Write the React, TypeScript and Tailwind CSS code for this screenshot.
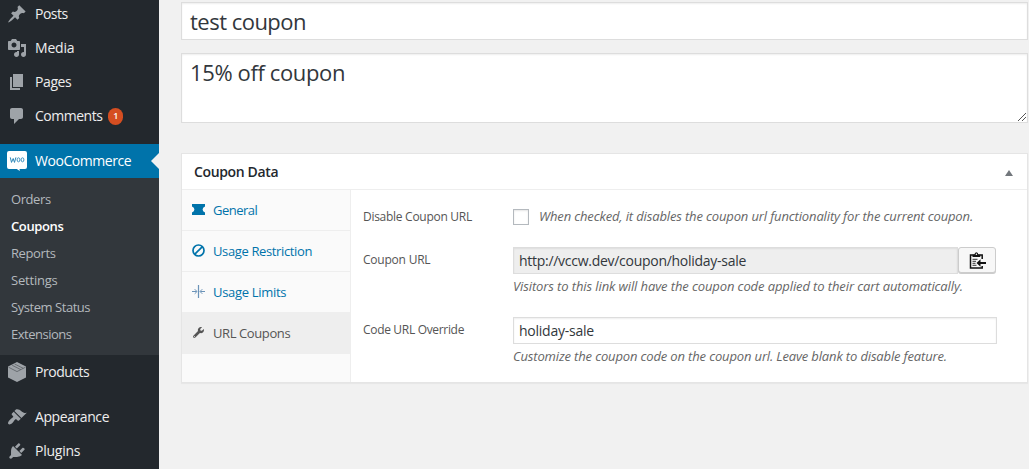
import type { ReactNode } from 'react';
import { FaWrench } from 'react-icons/fa';

function DashIcon({ d }: { d: string }) {
  return (
    <svg viewBox="0 0 20 20" className="size-5 shrink-0 fill-[#9ea3a8]">
      <path d={d} />
    </svg>
  );
}

const icons = {
  post: 'M10.44 3.02l1.82-1.82 6.36 6.35-1.83 1.82c-1.05-.68-2.48-.57-3.41.36l-.75.75c-.92.93-1.04 2.35-.35 3.41l-1.83 1.82-2.41-2.41-2.8 2.79c-.42.42-3.38 2.71-3.8 2.29s1.86-3.39 2.28-3.81l2.79-2.79L4.1 9.36l1.83-1.82c1.05.69 2.48.57 3.4-.36l.75-.75c.93-.92 1.05-2.35.36-3.41z',
  media:
    'M13 11V4c0-.55-.45-1-1-1h-1.67L9 1H5L3.67 3H2c-.55 0-1 .45-1 1v7c0 .55.45 1 1 1h10c.55 0 1-.45 1-1zM7 4.5c1.38 0 2.5 1.12 2.5 2.5S8.38 9.5 7 9.5 4.5 8.38 4.5 7 5.62 4.5 7 4.5zM14 6h5v10.5c0 1.38-1.12 2.5-2.5 2.5S14 17.88 14 16.5s1.12-2.5 2.5-2.5c.17 0 .34.02.5.05V9h-3V6zm-4 8.05V13h2v3.5c0 1.38-1.12 2.5-2.5 2.5S7 17.88 7 16.5 8.12 14 9.5 14c.17 0 .34.02.5.05z',
  page: 'M6 15V2h10v13H6zm-1 1h8v2H3V5h2v11z',
  comments: 'M5 2h9c1.1 0 2 .9 2 2v7c0 1.1-.9 2-2 2h-2l-5 5v-5H5c-1.1 0-2-.9-2-2V4c0-1.1.9-2 2-2z',
  appearance:
    'M14.48 11.06L7.41 3.99l1.5-1.5c.5-.56 2.3-.47 3.51.32 1.21.8 1.43 1.28 2.91 2.1 1.18.64 2.45 1.26 4.45.85zm-.71.71L6.7 4.7 4.93 6.47c-.39.39-.39 1.02 0 1.41l1.06 1.06c.39.39.39 1.03 0 1.42-.6.6-1.43 1.11-2.21 1.69-.35.26-.7.53-1.01.84C1.43 14.23.4 16.08 1.4 17.07c.99 1 2.84-.03 4.18-1.36.31-.31.58-.66.85-1.02.57-.78 1.08-1.61 1.69-2.21.39-.39 1.02-.39 1.41 0l1.06 1.06c.39.39 1.02.39 1.41 0z',
  plugins:
    'M13.11 4.36L9.87 7.6 8 5.73l3.24-3.24c.35-.34 1.05-.2 1.56.32.52.51.66 1.21.31 1.55zm-8 1.77l.91-1.12 9.01 9.01-1.19.84c-.71.71-2.63 1.16-3.82 1.16H6.14L4.9 17.26c-.59.59-1.54.59-2.12 0-.59-.58-.59-1.53 0-2.12l1.24-1.24v-3.88c0-1.13.4-3.19 1.09-3.89zm7.26 3.97l3.24-3.24c.34-.35 1.04-.21 1.55.31.52.51.66 1.21.31 1.55l-3.24 3.25z',
};

function ProductIcon() {
  return (
    <svg viewBox="0 0 20 20" className="size-5 shrink-0">
      <path d="M10 0l9 4.6v10.8L10 20l-9-4.6V4.6z" fill="#9ea3a8" />
      <path d="M1.500 5.200L10 9.600l8.500-4.400M5.200 3.300l8.600 4.300M7.600 2l8.600 4.300" fill="none" stroke="#4b5055" strokeWidth=".65" />
    </svg>
  );
}

function WooIcon() {
  return (
    <svg viewBox="0 0 20 20" className="size-5 shrink-0">
      <path d="M2 0h16q2 0 2 2v14q0 2-2 2h-5.500l.3 2-3-2H2q-2 0-2-2V2Q0 0 2 0z" fill="#fff" />
      <path d="M3.300 6.400l1.200 5 1.700-3.900 1.300 3.900 1.400-5" fill="none" stroke="#2b86b8" strokeWidth="1" />
      <ellipse cx="11.500" cy="8.800" rx="1.400" ry="2" fill="none" stroke="#2b86b8" strokeWidth=".9" />
      <ellipse cx="15.500" cy="8.800" rx="1.400" ry="2" fill="none" stroke="#2b86b8" strokeWidth=".9" />
    </svg>
  );
}

function MenuItem({ icon, label, tracking, children }: { icon: ReactNode; label: string; tracking: string; children?: ReactNode }) {
  return (
    <a className="flex h-[34px] shrink-0 items-center pl-[7px] text-sm text-[#eee]">
      {icon}
      <span className={`ml-2 ${tracking}`}>{label}</span>
      {children}
    </a>
  );
}

const submenu = [
  { label: 'Orders', style: 'tracking-[-0.42px]' },
  { label: 'Coupons', style: 'font-semibold text-white tracking-[-0.38px]' },
  { label: 'Reports', style: 'tracking-[-0.4px]' },
  { label: 'Settings', style: 'tracking-[-0.2px]' },
  { label: 'System Status', style: 'tracking-[-0.45px]' },
  { label: 'Extensions', style: 'tracking-[-0.5px]' },
];

function Sidebar() {
  return (
    <nav className="flex w-[159px] shrink-0 flex-col overflow-hidden bg-[#23282d]">
      <div className="-mt-[3px] flex flex-col">
        <MenuItem icon={<DashIcon d={icons.post} />} label="Posts" tracking="tracking-[-0.5px]" />
        <MenuItem icon={<DashIcon d={icons.media} />} label="Media" tracking="tracking-[-0.2px]" />
        <MenuItem icon={<DashIcon d={icons.page} />} label="Pages" tracking="tracking-[-0.4px]" />
        <MenuItem icon={<DashIcon d={icons.comments} />} label="Comments" tracking="tracking-[-0.48px]">
          <span className="ml-1.5 flex h-[17px] w-[15px] items-center justify-center rounded-full bg-[#d54e21] text-[9px] font-semibold text-white">
            1
          </span>
        </MenuItem>
      </div>
      <div className="mt-[11px] flex items-center justify-between bg-[#0073aa]">
        <MenuItem icon={<WooIcon />} label="WooCommerce" tracking="text-white tracking-[-0.45px]" />
        <svg viewBox="0 0 8 16" className="h-4 w-2 fill-[#f1f1f1]">
          <path d="M8 0v16L0 8z" />
        </svg>
      </div>
      <ul className="flex h-[177px] shrink-0 flex-col bg-[#32373c] pt-2 text-[13px] text-[#b4b9be]">
        {submenu.map((item) => (
          <li key={item.label} className={`h-[27px] pl-[11px] leading-[27px] ${item.style}`}>
            {item.label}
          </li>
        ))}
      </ul>
      <MenuItem icon={<ProductIcon />} label="Products" tracking="tracking-[-0.48px]" />
      <div className="mt-[11px]">
        <MenuItem icon={<DashIcon d={icons.appearance} />} label="Appearance" tracking="tracking-[-0.42px]" />
        <MenuItem icon={<DashIcon d={icons.plugins} />} label="Plugins" tracking="tracking-[-0.25px]" />
      </div>
    </nav>
  );
}

const TicketIcon = () => (
  <svg viewBox="0 0 13 11" className="h-[11px] w-[13px] fill-[#0073aa]">
    <path d="M0 0h13v2.500q-2.400 1-2.400 3t2.400 3V11H0V8.500q2.400-1 2.400-3T0 2.500z" />
  </svg>
);
const BanIcon = () => (
  <svg viewBox="0 0 13 13" className="size-[13px] fill-none stroke-[#0073aa]">
    <circle cx="6.500" cy="6.500" r="5.500" strokeWidth="1.700" />
    <path d="M2.800 10.200l7.400-7.400" strokeWidth="1.700" />
  </svg>
);
const LimitsIcon = () => (
  <svg viewBox="0 0 13 13" className="size-[13px] fill-none stroke-[#6b93b8]">
    <path d="M6.500 0v13" strokeWidth="1.200" />
    <path d="M0 6.500h4.700M2.700 4.200L5 6.500 2.700 8.800M13 6.500H8.300M10.300 4.200L8 6.500l2.300 2.300" />
  </svg>
);

const tabs = [
  { label: 'General', icon: <TicketIcon />, tracking: 'tracking-[-0.5px]' },
  { label: 'Usage Restriction', icon: <BanIcon />, tracking: 'tracking-[-0.37px]' },
  { label: 'Usage Limits', icon: <LimitsIcon />, tracking: 'tracking-[-0.3px]' },
  { label: 'URL Coupons', icon: <FaWrench className="ml-px size-[11px]" />, tracking: 'tracking-[-0.4px]', active: true },
];

function Tabs() {
  return (
    <ul className="w-[169px] shrink-0 border-r border-[#eee] bg-[#fafafa] text-[13px]">
      {tabs.map((tab) => (
        <li
          key={tab.label}
          className={`flex h-[41px] items-center border-b border-[#eee] pl-2.5 ${tab.active ? 'bg-[#eee] text-[#555]' : 'text-[#0073aa]'}`}
        >
          <span className="mb-0.5 flex w-[13px] items-center">{tab.icon}</span>
          <span className={`ml-2 pt-0.5 ${tab.tracking}`}>{tab.label}</span>
        </li>
      ))}
    </ul>
  );
}

function ClipboardIcon() {
  return (
    <svg viewBox="0 0 17 17" className="h-[17px] w-[17px]">
      <path d="M13.200 7V3H1.500v13h11.700v-2" fill="none" stroke="#111" strokeWidth="1.500" />
      <path d="M3.500 5V2.800h2Q5.500.3 7.400.3t1.900 2.500h2V5z" fill="#111" />
      <circle cx="7.400" cy="2.300" r=".8" fill="#fff" />
      <path d="M3.500 7.300h5M3.500 9.300h3.500M3.500 11.300h3M3.500 13.300h4" stroke="#333" />
      <path d="M7.500 11l4-3.700v2.600H17v2.200h-5.500v2.600z" fill="#111" />
    </svg>
  );
}

const label = 'w-[150px] shrink-0 text-xs leading-4 text-[#555]';
const hint = 'text-[13px] italic leading-[18px] whitespace-nowrap text-[#666]';
const field = 'flex items-center border border-[#ddd] text-sm text-[#32373c] shadow-[inset_0_1px_2px_rgba(0,0,0,0.07)]';

function Panel() {
  return (
    <div className="flex flex-1 flex-col pl-3">
      <div className="flex h-9 items-start pt-[18px]">
        <span className={`${label} pt-px tracking-[-0.28px]`}>Disable Coupon URL</span>
        <span className="mt-px size-4 border border-[#b4b9be] bg-white shadow-[inset_0_1px_2px_rgba(0,0,0,0.1)]" />
        <span className={`${hint} -mt-px ml-2.5 tracking-[-0.138px]`}>
          When checked, it disables the coupon url functionality for the current coupon.
        </span>
      </div>
      <div className="mt-[21px] flex">
        <span className={`${label} pt-[5px] tracking-[-0.22px]`}>Coupon URL</span>
        <div>
          <div className="flex w-[483px]">
            <div className={`${field} h-[27px] flex-1 bg-[#eee] pt-px pl-[5px] tracking-[-0.28px]`}>http://vccw.dev/coupon/holiday-sale</div>
            <button className="flex h-[26px] w-[38px] items-center justify-center rounded-[3px] border border-[#ccc] bg-[#f7f7f7] shadow-[0_1px_0_#ccc]">
              <ClipboardIcon />
            </button>
          </div>
          <p className={`${hint} mt-[3px] tracking-[-0.104px]`}>
            Visitors to this link will have the coupon code applied to their cart automatically.
          </p>
        </div>
      </div>
      <div className="mt-[22px] flex">
        <span className={`${label} pt-[5px] tracking-[-0.32px]`}>Code URL Override</span>
        <div>
          <div className={`${field} h-[27px] w-[484px] bg-white pt-px pl-[5px] tracking-[-0.24px]`}>holiday-sale</div>
          <p className={`${hint} mt-[3px] tracking-[-0.146px]`}>
            Customize the coupon code on the coupon url. Leave blank to disable feature.
          </p>
        </div>
      </div>
    </div>
  );
}

const bigField = 'border border-[#ddd] bg-white pl-2 text-[22px] text-[#32373c] shadow-[inset_0_1px_2px_rgba(0,0,0,0.07)]';

export default function App() {
  return (
    <div className="flex h-[469px] w-[1029px] overflow-hidden bg-[#f1f1f1] font-['Open_Sans','Noto_Sans',sans-serif]">
      <Sidebar />
      <main className="flex w-[869px] flex-col pt-0.5 pl-[22px]">
        <div className={`${bigField} h-[38px] leading-[37px] tracking-[-0.517px]`}>test coupon</div>
        <div className={`${bigField} mt-[13px] flex h-[70px] justify-between leading-[37px] tracking-[-0.376px]`}>
          <span>15% off coupon</span>
          <svg viewBox="0 0 8 8" className="mr-px mb-px size-2 self-end fill-none stroke-[#555]">
            <path d="M0 8l8-8M4 8l4-4" />
          </svg>
        </div>
        <section className="mt-[30px] flex h-[230px] flex-col border border-[#e5e5e5] bg-white shadow-[0_1px_1px_rgba(0,0,0,0.04)]">
          <header className="flex h-9 shrink-0 items-center justify-between border-b border-[#eee] pr-3.5 pl-3">
            <h2 className="text-sm font-semibold tracking-[-0.36px] text-[#23282d]">Coupon Data</h2>
            <svg viewBox="0 0 8 6" className="mt-0.5 h-1.5 w-2 fill-[#72777c]">
              <path d="M4 0l4 6H0z" />
            </svg>
          </header>
          <div className="flex flex-1">
            <Tabs />
            <Panel />
          </div>
        </section>
      </main>
    </div>
  );
}
